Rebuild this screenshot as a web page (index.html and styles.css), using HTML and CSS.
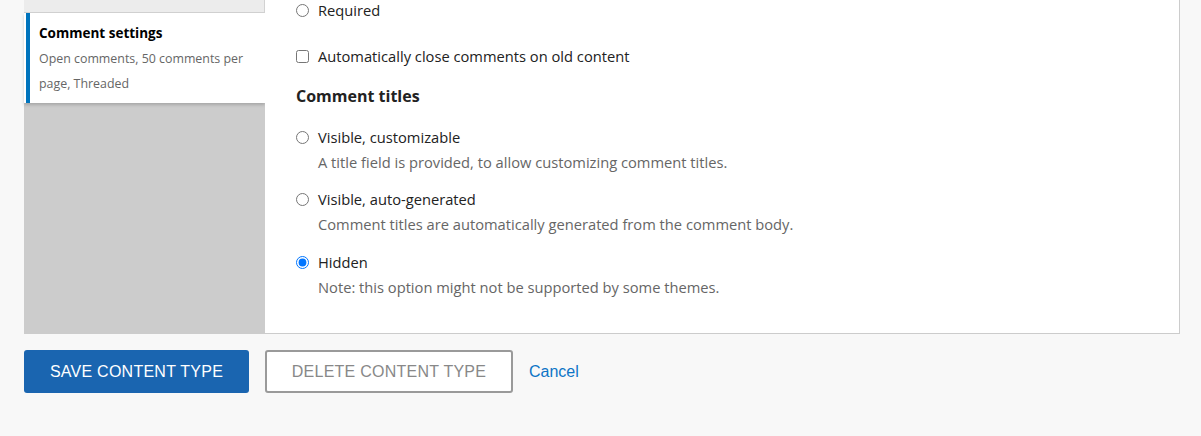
FILE: index.html
```html
<!DOCTYPE html>
<html>
<head>
<meta charset="utf-8">
<link rel="stylesheet" href="styles.css">
</head>
<body>
<div class="page">
  <div class="vtabs">
    <div class="tabs-list">
      <div class="tab-prev"></div>
      <div class="tab-active">
        <div class="tab-inner">
          <div class="tab-title">Comment settings</div>
          <div class="tab-summary">Open comments, 50 comments per page, Threaded</div>
        </div>
      </div>
    </div>
    <div class="pane">
      <label class="opt opt-first"><input type="radio" name="req"> <span>Required</span></label>
      <label class="opt opt-check"><input type="checkbox"> <span>Automatically close comments on old content</span></label>
      <h3 class="group-title">Comment titles</h3>
      <div class="item">
        <label class="opt"><input type="radio" name="title"> <span>Visible, customizable</span></label>
        <div class="desc">A title field is provided, to allow customizing comment titles.</div>
      </div>
      <div class="item">
        <label class="opt"><input type="radio" name="title"> <span>Visible, auto-generated</span></label>
        <div class="desc">Comment titles are automatically generated from the comment body.</div>
      </div>
      <div class="item item-last">
        <label class="opt"><input type="radio" name="title" checked> <span>Hidden</span></label>
        <div class="desc">Note: this option might not be supported by some themes.</div>
      </div>
    </div>
  </div>
  <div class="actions">
    <button class="btn btn-primary">Save content type</button>
    <button class="btn btn-secondary">Delete content type</button>
    <a class="cancel" href="#">Cancel</a>
  </div>
</div>
</body>
</html>
```

FILE: styles.css
```css
html, body {
  margin: 0;
  padding: 0;
  background: #f8f8f8;
  font-family: "Open Sans", "DejaVu Sans", sans-serif;
  color: #222;
}

.page {
  padding: 0 21px 0 24px;
}

.vtabs {
  display: flex;
  border-right: 1px solid #ccc;
  border-bottom: 1px solid #ccc;
}

.tabs-list {
  width: 241px;
  flex: none;
  background: #ccc;
}

.tab-prev {
  height: 12px;
  background: #ececec;
  border-bottom: 1px solid #d2d2d2;
  border-right: 1px solid #d2d2d2;
}

.tab-active {
  background: #fff;
  padding-left: 2px;
  box-shadow: 0 2px 3px rgba(0, 0, 0, 0.18);
}

.tab-inner {
  border-left: 4px solid #0074bd;
  padding: 10px 10px 7px 9px;
}

.tab-title {
  font-size: 13.5px;
  font-weight: 700;
  line-height: 20px;
  color: #000;
}

.tab-summary {
  margin-top: 3px;
  font-size: 12.4px;
  line-height: 25px;
  color: #666;
}

.pane {
  flex: 1;
  background: #fff;
  padding: 0 0 34px 31px;
}

.opt {
  display: flex;
  align-items: center;
  font-size: 14.7px;
  line-height: 22px;
  color: #222;
}

.opt input {
  margin: 0 9px 0 0;
  width: 13px;
  height: 13px;
  flex: none;
}

.opt-first {
  margin-top: -1px;
}

.opt-check {
  margin-top: 24px;
}

.group-title {
  margin: 17px 0 0;
  font-size: 16px;
  font-weight: 700;
  line-height: 24px;
  color: #222;
}

.item {
  margin-top: 18px;
}

.item + .item {
  margin-top: 14px;
}

.item-last {
  margin-top: 15px !important;
}

.desc {
  margin: 2px 0 0 22px;
  font-size: 14.7px;
  line-height: 24px;
  color: #666;
}

.actions {
  display: flex;
  align-items: center;
  gap: 16px;
  padding-top: 16px;
}

.btn {
  height: 43px;
  padding: 0;
  font-family: "Liberation Sans", Arial, sans-serif;
  font-size: 16px;
  letter-spacing: 0.25px;
  text-transform: uppercase;
  border-radius: 3px;
  box-sizing: border-box;
  cursor: pointer;
}

.btn-primary {
  width: 225px;
  background: #1a65b0;
  color: #fff;
  border: 0;
}

.btn-secondary {
  width: 248px;
  background: #fff;
  color: #888;
  border: 2px solid #9a9a9a;
}

.cancel {
  font-family: "Liberation Sans", Arial, sans-serif;
  font-size: 16px;
  color: #0d74c6;
  text-decoration: none;
}
```
